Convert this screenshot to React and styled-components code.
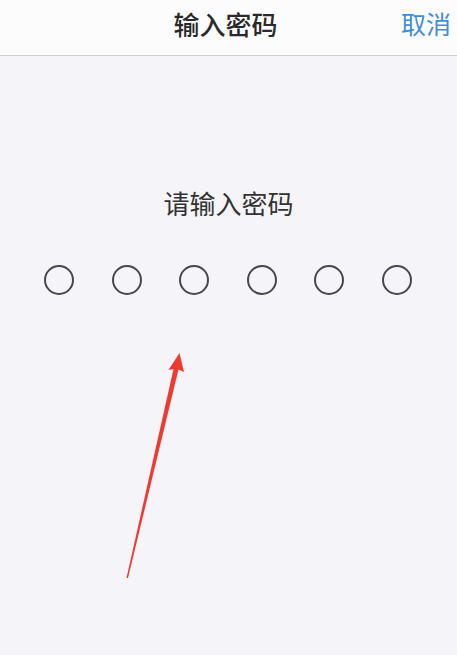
import React from "react";
import styled, { createGlobalStyle } from "styled-components";

const Global = createGlobalStyle`
  html, body { margin: 0; padding: 0; background: #f5f5f9; }
  body { font-family: "Noto Sans CJK SC", "Noto Sans", sans-serif; }
`;

const Page = styled.div`
  position: relative;
  width: 457px;
  height: 655px;
  background: #f5f5f9;
  overflow: hidden;
`;

const Header = styled.header`
  height: 56px;
  background: #fcfcfd;
  border-bottom: 1px solid #cfcfd3;
  display: grid;
  grid-template-columns: 1fr auto 1fr;
  align-items: center;
  box-sizing: border-box;
  padding: 0 6px 0 0;
`;

const Title = styled.h1`
  grid-column: 2;
  margin: 0;
  font-size: 26px;
  font-weight: 500;
  color: #2a2a2a;
  line-height: 1;
  transform: translateY(-4px);
`;

const Cancel = styled.button`
  justify-self: end;
  border: 0;
  background: none;
  padding: 0;
  font-family: inherit;
  font-size: 25px;
  color: #3d8fd9;
  line-height: 1;
  transform: translateY(-4px);
`;

const Body = styled.main`
  display: flex;
  flex-direction: column;
  align-items: center;
  padding-top: 132px;
`;

const Prompt = styled.p`
  margin: 0;
  font-size: 26px;
  color: #333;
  line-height: 30px;
  font-weight: 400;
`;

const Dots = styled.div`
  display: flex;
  gap: 37.5px;
  margin-top: 47px;
  margin-right: 1px;
`;

const Dot = styled.span`
  width: 30px;
  height: 30px;
  box-sizing: border-box;
  border: 2px solid #474747;
  border-radius: 50%;
  background: ${(p) => (p.filled ? "#474747" : "transparent")};
`;

const Arrow = styled.svg`
  position: absolute;
  left: 0;
  top: 0;
  pointer-events: none;
`;

export default function App() {
  return (
    <>
      <Global />
      <Page>
        <Header>
          <Title>输入密码</Title>
          <Cancel>取消</Cancel>
        </Header>
        <Body>
          <Prompt>请输入密码</Prompt>
          <Dots>
            {Array.from({ length: 6 }).map((_, i) => (
              <Dot key={i} />
            ))}
          </Dots>
        </Body>
        <Arrow width="457" height="655" viewBox="0 0 457 655">
          <path
            d="M126.5 578 L173.5 369 L168.5 370 L179.5 353 L184 372 L178.5 369.5 L128 578 Z"
            fill="#ee3a2f"
          />
        </Arrow>
      </Page>
    </>
  );
}
